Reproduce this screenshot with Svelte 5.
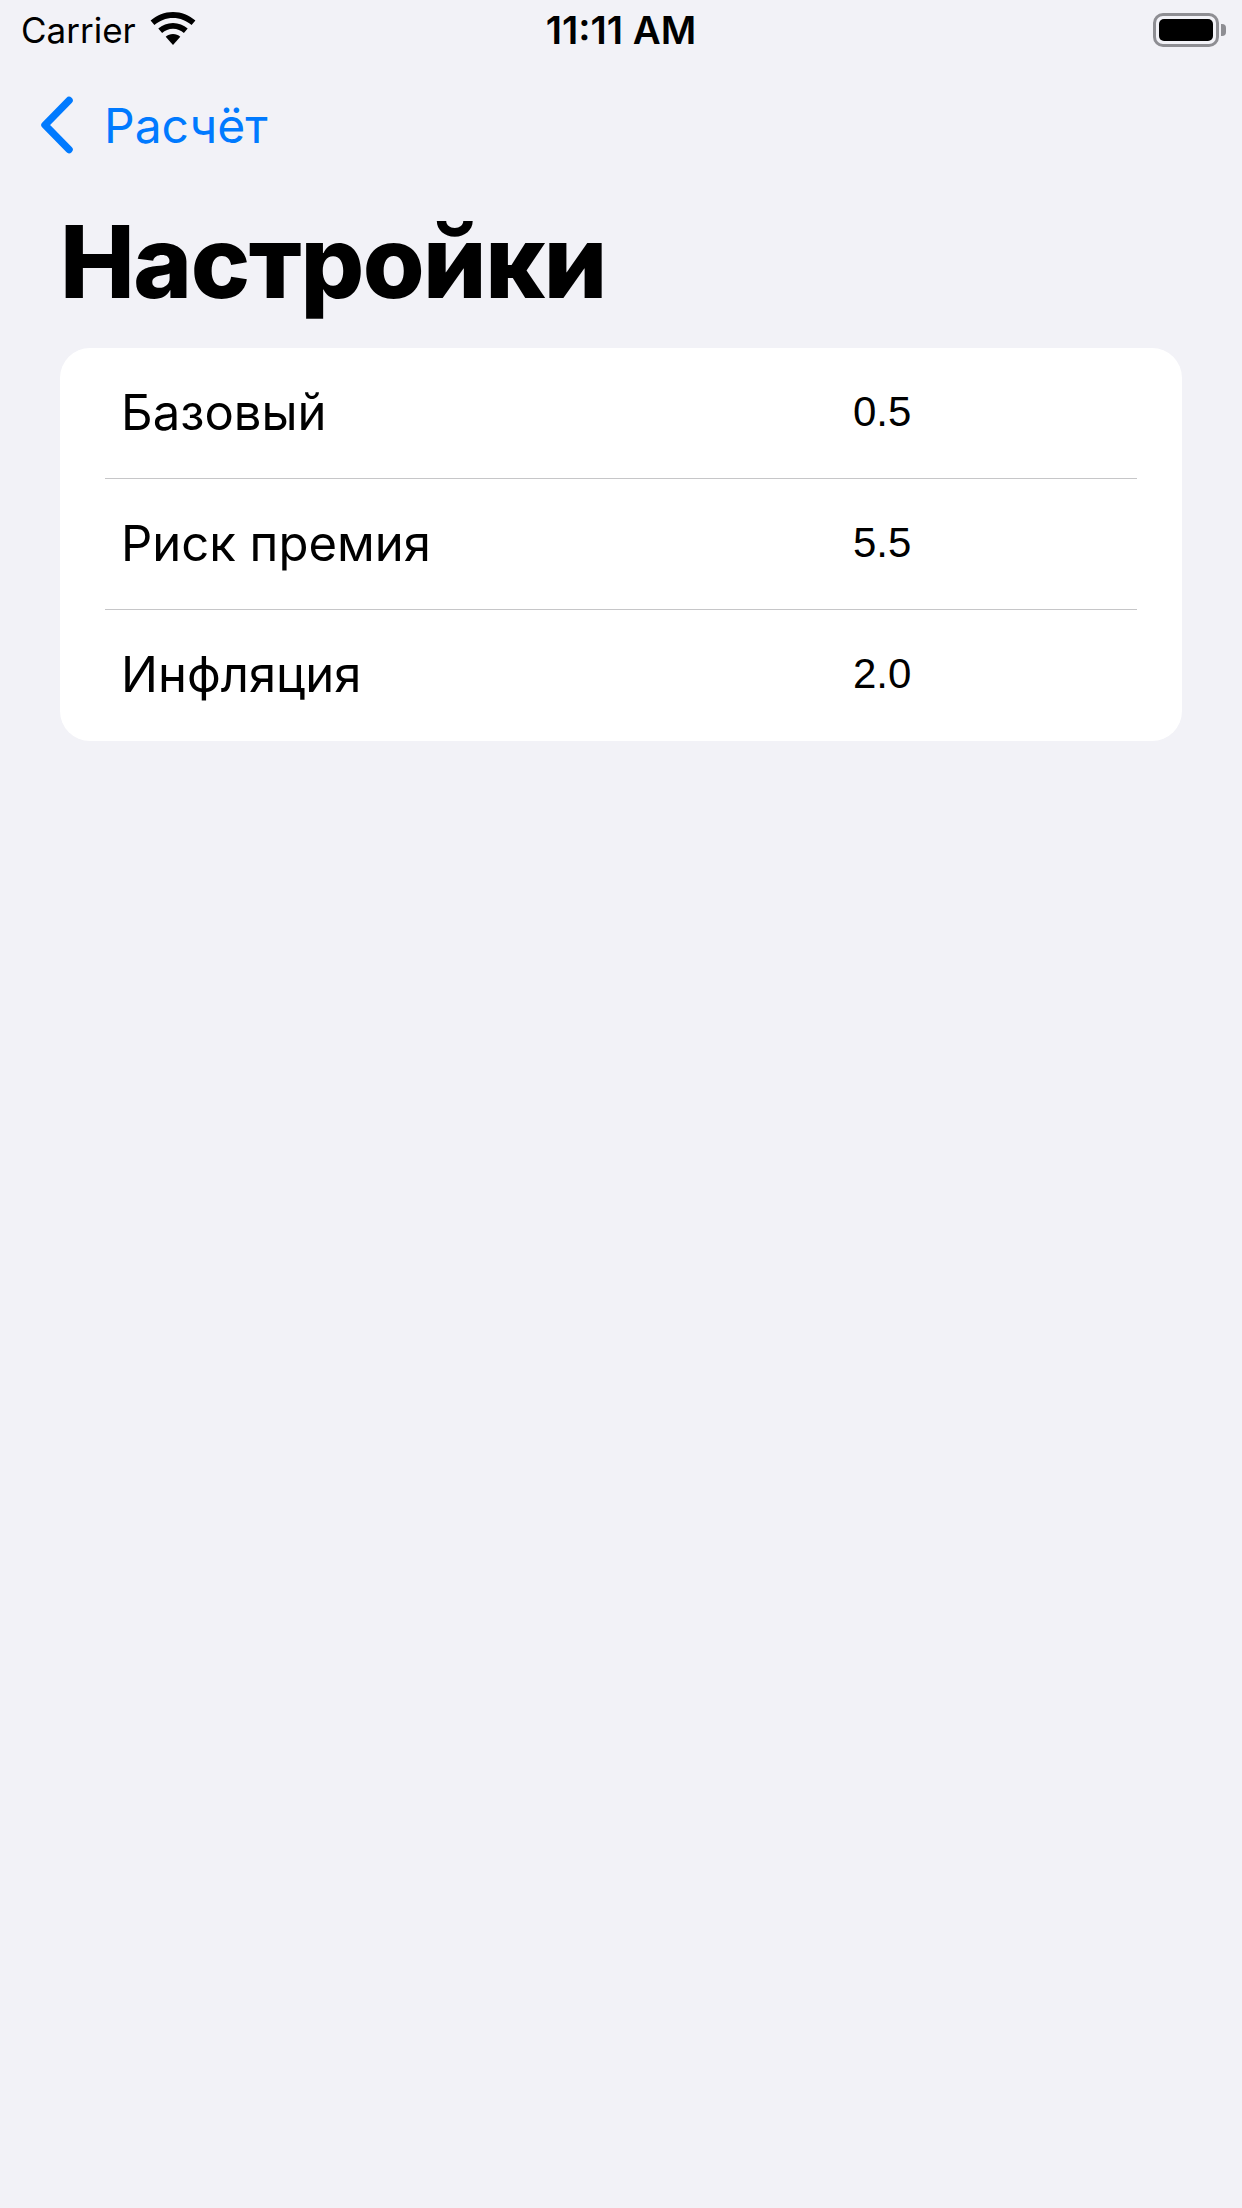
<script>
  const rows = [
    { label: 'Базовый', value: '0.5' },
    { label: 'Риск премия', value: '5.5' },
    { label: 'Инфляция', value: '2.0' }
  ];
</script>

<div class="screen">
  <header class="status">
    <div class="carrier">
      <span>Carrier</span>
      <svg class="wifi" viewBox="0 0 46 33" width="46" height="33" aria-hidden="true">
        <path d="M23 0C14.5 0 6.7 3.2 0.6 8.6L4.4 13C9.4 8.6 15.9 5.9 23 5.9s13.6 2.7 18.6 7.1l3.8-4.4C39.300 3.2 31.500 0 23 0z" />
        <path d="M23 11C17.400 11 12.300 13.100 8.300 16.600L12.100 21C15 18.400 18.800 16.800 23 16.800s8 1.600 10.900 4.200L37.700 16.600C33.700 13.100 28.600 11 23 11z" />
        <path d="M23 22C20.200 22 17.700 23 15.700 24.700L23 33L30.300 24.700C28.300 23 25.800 22 23 22z" />
      </svg>
    </div>
    <time class="clock">11:11 AM</time>
    <div class="battery" aria-hidden="true">
      <span class="shell"><span class="level"></span></span>
      <span class="cap"></span>
    </div>
  </header>

  <nav class="nav">
    <svg class="chevron" viewBox="0 0 34 58" width="34" height="58" aria-hidden="true">
      <path d="M29 4.500 L5 29 L29 53.500" fill="none" stroke="currentColor" stroke-width="7.500" stroke-linecap="round" stroke-linejoin="round" />
    </svg>
    <span>Расчёт</span>
  </nav>

  <h1>Настройки</h1>

  <ul class="card">
    {#each rows as row}
      <li class="row">
        <span class="label">{row.label}</span>
        <span class="value">{row.value}</span>
      </li>
    {/each}
  </ul>
</div>

<style>
  :global(body) {
    background: #f2f2f7;
  }
  .screen {
    height: 2208px;
    background: #f2f2f7;
    color: #000;
    font-family: Inter, 'Liberation Sans', sans-serif;
    overflow: hidden;
  }
  .status {
    display: grid;
    grid-template-columns: 1fr auto 1fr;
    align-items: center;
    height: 60px;
    padding: 0 16px;
  }
  .carrier {
    display: flex;
    align-items: center;
    gap: 14px;
    padding-left: 5px;
    font-size: 35px;
    line-height: 40px;
  }
  .wifi {
    margin-top: -3px;
    fill: #000;
  }
  .clock {
    font-size: 38.5px;
    font-weight: 600;
    line-height: 40px;
  }
  .battery {
    display: flex;
    align-items: center;
    justify-content: flex-end;
    gap: 2px;
  }
  .shell {
    display: block;
    box-sizing: border-box;
    width: 66px;
    height: 34px;
    padding: 3px;
    border: 3px solid #8e8e93;
    border-radius: 10px;
  }
  .level {
    display: block;
    height: 100%;
    background: #000;
    border-radius: 5px;
  }
  .cap {
    width: 5px;
    height: 12px;
    background: #8e8e93;
    border-radius: 0 4px 4px 0;
  }
  .nav {
    display: flex;
    align-items: center;
    gap: 30px;
    margin-top: 36px;
    padding-left: 40px;
    height: 58px;
    color: #007aff;
    font-size: 48px;
  }
  h1 {
    margin: 46px 0 0;
    padding-left: 60px;
    font-size: 100px;
    letter-spacing: -1.5px;
    line-height: 124px;
    font-weight: 800;
  }
  .card {
    list-style: none;
    margin: 24px 60px 0;
    padding: 0;
    background: #fff;
    border-radius: 30px;
  }
  .row {
    position: relative;
    display: grid;
    grid-template-columns: 732px auto;
    align-items: center;
    height: 131px;
    padding-left: 61px;
  }
  .row + .row::before {
    content: '';
    position: absolute;
    top: -1px;
    left: 45px;
    right: 45px;
    height: 1px;
    background: #c6c6c8;
  }
  .label {
    margin-top: -2px;
    font-size: 49px;
  }
  .value {
    margin-top: -3px;
    font-family: 'Liberation Sans', Arial, sans-serif;
    font-size: 42px;
  }
</style>
